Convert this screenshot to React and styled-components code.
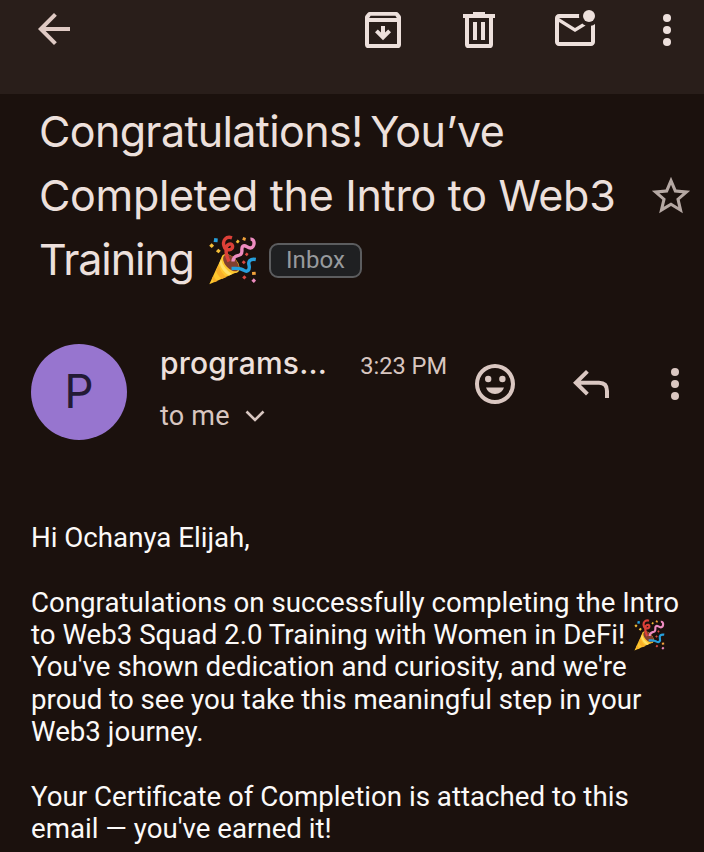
import styled, { createGlobalStyle } from "styled-components";

const GlobalStyle = createGlobalStyle`
  body {
    margin: 0;
    background-color: #1b110d;
    overflow: hidden;
  }
`;

const Page = styled.div`
  width: 704px;
  height: 852px;
  overflow: hidden;
  background-color: #1b110d;
  color: #ede0dc;
  font-family: Roboto, sans-serif;
`;

const Toolbar = styled.header`
  display: flex;
  align-items: flex-start;
  box-sizing: border-box;
  height: 94px;
  padding: 6px 13px 0 30px;
  background-color: #291e1a;
`;

const Actions = styled.div`
  display: flex;
  gap: 48px;
  margin-left: auto;
  margin-right: 44px;
`;

const Icon = styled.svg`
  display: block;
  flex: none;
  width: ${(props) => props.$size || 48}px;
  height: ${(props) => props.$size || 48}px;
  margin-top: ${(props) => props.$top || 0}px;
  fill: ${(props) => props.$color || "#ede0dc"};
`;

const Subject = styled.section`
  display: flex;
  justify-content: space-between;
  height: 193px;
  padding: 5px 10px 0 39px;
`;

const Title = styled.h1`
  margin: 0;
  font-family: Inter, sans-serif;
  font-size: 43px;
  font-weight: 400;
  line-height: 64px;
`;

const TitleLine = styled.span`
  display: flex;
  align-items: center;
  height: 64px;
  white-space: nowrap;
  letter-spacing: ${(props) => props.$spacing}px;
  word-spacing: ${(props) => props.$wordSpacing || 0}px;
`;

const TitleWord = styled.span`
  width: 155px;
`;

const Label = styled.span`
  box-sizing: border-box;
  width: 93px;
  height: 35px;
  margin-top: 2px;
  margin-left: 12px;
  border: 2px solid #5c5d5f;
  border-radius: 9px;
  background-color: #1f2022;
  color: #979a9d;
  font-family: Roboto, sans-serif;
  font-size: 24px;
  font-weight: 400;
  line-height: 30px;
  letter-spacing: 0.1px;
  text-align: center;
`;

const Confetti = styled.svg`
  display: inline-block;
  flex: none;
  width: ${(props) => props.$size}px;
  height: ${(props) => props.$size}px;
  margin-top: ${(props) => props.$top || 0}px;
  margin-left: ${(props) => props.$left || 0}px;
  vertical-align: top;
`;

const Sender = styled.section`
  display: flex;
  align-items: flex-start;
  height: 96px;
  padding: 52px 5px 0 31px;
`;

const Avatar = styled.div`
  width: 96px;
  height: 96px;
  border-radius: 50%;
  background-color: #9775cf;
  color: #231a35;
  font-family: Inter, sans-serif;
  font-size: 46px;
  font-weight: 400;
  line-height: 94px;
  text-align: center;
`;

const Details = styled.div`
  width: 287px;
  margin-left: 33px;
`;

const NameRow = styled.div`
  display: flex;
  justify-content: space-between;
  align-items: baseline;
  height: 40px;
  line-height: 38px;
  white-space: nowrap;
`;

const Name = styled.span`
  font-family: Inter, sans-serif;
  font-size: 30px;
  font-weight: 500;
  letter-spacing: 0.2px;
`;

const Time = styled.span`
  color: #d8c6c0;
  font-size: 23.6px;
`;

const Recipient = styled.div`
  display: flex;
  align-items: center;
  margin-top: 12px;
  height: 40px;
  color: #d8c6c0;
  font-size: 27px;
  letter-spacing: 0.2px;
`;

const Chevron = styled.svg`
  width: 20px;
  height: 12px;
  margin-left: 15.5px;
  fill: none;
  stroke: #d8c6c0;
  stroke-width: 2.6;
`;

const SenderActions = styled.div`
  display: flex;
  margin-top: 16px;
  margin-left: auto;
  margin-right: 36px;
  gap: 48px;
`;

const Message = styled.main`
  padding: 82px 0 0 31px;
  color: #fbf9f8;
  font-size: 27.68px;
  line-height: 32.35px;
  white-space: nowrap;
`;

const Paragraph = styled.p`
  margin: 0 0 32.35px;
`;

const Line = styled.span`
  display: block;
  height: 32.35px;
`;

function MoreIcon({ color, top }) {
  return (
    <Icon viewBox="0 0 24 24" $color={color} $top={top}>
      <circle cx="12" cy="6" r="2" />
      <circle cx="12" cy="12" r="2" />
      <circle cx="12" cy="18" r="2" />
    </Icon>
  );
}

function PartyPopper(props) {
  return (
    <Confetti viewBox="0 0 50 50" role="img" aria-label="🎉" {...props}>
      <path d="M2.3 49.3 15.5 20.5Q24 22 31.5 36.5Z" fill="#fdc72e" />
      <path d="M11.5 30Q14 38 19.5 42L15 44Q10 40 9 35.500Z" fill="#f7ae28" />
      <path d="M6.500 40.500Q7.500 44 10.500 46L7.500 47.300Q5.500 45.500 5 43.500Z" fill="#f7ae28" />
      <path d="M14 24Q17 34 25 39L22 40.500Q14.500 36 12.500 28Z" fill="#ffe068" />
      <ellipse cx="23.500" cy="28.500" rx="11.300" ry="6.600" transform="rotate(48 23.5 28.5)" fill="#fdc72e" />
      <ellipse cx="24" cy="28" rx="10" ry="5.600" transform="rotate(48 24 28)" fill="#81402f" />
      <g fill="none" strokeWidth="3.400">
        <path d="M25 2.800C19 .8 15.200 5.500 17 11C18.500 16.500 26.500 15.500 25.500 10.800C24.500 7.500 19 9 19 14.500C19 18.500 19.500 21.500 22 26.500" stroke="#dc4038" />
        <path d="M43.500 4.300C48.500 3.500 48 12.700 43.500 13C40 13.200 38.500 9 35.800 11.300C33.500 13.500 36.500 17.500 33.500 19.500C31 21.500 26.500 19.500 26 26.500" stroke="#ed8cc0" />
        <path d="M48.800 24.500C43 23.500 41 26.500 42 30C43.200 34.700 40.500 37.500 37 35.400C33 32.500 29 33.500 24.500 33.500" stroke="#269fdb" />
      </g>
      <path d="m7.300 3 3.500.5-.3 3.800-3.900-.4Z" fill="#269fdb" />
      <path d="m4.700 8.300 2.400 2.400-2.400 2.400-2.500-2.400ZM11.300 13.800l2.500 1.900-2.200 2.600-2.700-2ZM30.700 4.600l2 1.700-1.700 2.300-2.300-1.700Z" fill="#f3bd38" />
      <path d="m36.300 2 2.700 1-.8 3-3-1.200ZM45 37l3.600-.2.2 3-3.600.3Z" fill="#f2a33b" />
      <path d="m39.600 17.500 2 1.600-1.700 2.200-2.100-1.700ZM36.700 25.300l2.100 2-2 2-2.100-2ZM37.300 40.300l2.200 2-2.100 2.200-2.200-2.100Z" fill="#d84a42" />
      <path d="m46.800 43.300 2.200 2.200-2.100 2.500-2.500-2.200Z" fill="#ed8cc0" />
    </Confetti>
  );
}

export default function App() {
  const muted = "#dac7c1";

  return (
    <Page>
      <GlobalStyle />
      <Toolbar>
        <Icon viewBox="0 0 24 24" $color="#dfcac4" $top={-1}>
          <path d="M20 11H7.830l5.590-5.590L12 4l-8 8 8 8 1.410-1.410L7.830 13H20Z" />
        </Icon>
        <Actions>
          <Icon viewBox="0 0 24 24">
            <path
              fillRule="evenodd"
              d="M5.300 3H18.700Q19.300 3 19.700 3.500L20.700 4.800Q21 5.200 21 5.700V19.200Q21 21 19.200 21H4.800Q3 21 3 19.200V5.700Q3 5.200 3.300 4.800L4.300 3.500Q4.700 3 5.300 3ZM5.800 4.900 5.100 6H18.900L18.200 4.900ZM5 8V19H19V8Z"
            />
            <path d="M11 10H13V13.200L14.600 11.700 16 13.100 12 17.100 8 13.100 9.400 11.700 11 13.200Z" />
          </Icon>
          <Icon viewBox="0 0 24 24">
            <path
              fillRule="evenodd"
              d="M9 3H15V4H20V6H19V19.200Q19 21 17.200 21H6.800Q5 21 5 19.200V6H4V4H9ZM7 6V19H17V6Z"
            />
            <path d="M9 8H11V17H9ZM13 8H15V17H13Z" />
          </Icon>
          <Icon viewBox="0 0 24 24">
            <circle cx="19" cy="5" r="3" />
            <path d="M22 8.980V18c0 1.100-.9 2-2 2H4c-1.100 0-2-.9-2-2V6c0-1.100.9-2 2-2h10.100a5 5 0 0 0 0 2H4l8 5 3.670-2.290c.47.430 1.020.760 1.630.980L12 13 4 8v10h16V9.900c.740-.150 1.420-.480 2-.920Z" />
          </Icon>
        </Actions>
        <MoreIcon />
      </Toolbar>
      <Subject>
        <Title>
          <TitleLine $spacing={-0.65} $wordSpacing={-4}>
            Congratulations! You’ve
          </TitleLine>
          <TitleLine $spacing={-0.3}>Completed the Intro to Web3</TitleLine>
          <TitleLine $spacing={-1.1}>
            <TitleWord>Training</TitleWord>
            <PartyPopper $size={50} $left={13} $top={2} />
            <Label>Inbox</Label>
          </TitleLine>
        </Title>
        <Icon viewBox="0 0 24 24" $size={46} $top={74} $color="#b5a8a3">
          <path d="m22 9.240-7.190-.620L12 2 9.190 8.630 2 9.240l5.460 4.730L5.820 21 12 17.270 18.180 21l-1.630-7.030L22 9.240ZM12 15.400l-3.760 2.270 1-4.280-3.320-2.880 4.380-.380L12 6.100l1.710 4.040 4.380.380-3.320 2.880 1 4.280L12 15.400Z" />
        </Icon>
      </Subject>
      <Sender>
        <Avatar>P</Avatar>
        <Details>
          <NameRow>
            <Name>programs...</Name>
            <Time>3:23 PM</Time>
          </NameRow>
          <Recipient>
            to me
            <Chevron viewBox="0 0 20 12">
              <path d="m1.500 1.500 8.500 8.500 8.500-8.500" />
            </Chevron>
          </Recipient>
        </Details>
        <SenderActions>
          <Icon viewBox="0 0 24 24" $color={muted}>
            <path
              fillRule="evenodd"
              d="M12 2a10 10 0 1 0 0 20 10 10 0 0 0 0-20Zm0 2a8 8 0 1 1 0 16 8 8 0 0 1 0-16Z"
            />
            <circle cx="8.600" cy="9.500" r="1.600" />
            <circle cx="15.700" cy="9.500" r="1.600" />
            <path d="M7.500 13.800H16.500Q15.500 17 12 17T7.500 13.800Z" />
          </Icon>
          <Icon viewBox="0 0 24 24" $color={muted}>
            <path d="M9.500 5 3 11.400l6.500 6.400 1.400-1.400-4-4H16Q19 12.400 19 15.500V19H21V15.500Q21 10.400 16 10.400H6.900l4-4Z" />
          </Icon>
        </SenderActions>
        <MoreIcon color={muted} top={16} />
      </Sender>
      <Message>
        <Paragraph>
          <Line>Hi Ochanya Elijah,</Line>
        </Paragraph>
        <Paragraph>
          <Line>Congratulations on successfully completing the Intro</Line>
          <Line>
            to Web3 Squad 2.0 Training with Women in DeFi!{" "}
            <PartyPopper $size={32} $left={1} />
          </Line>
          <Line>You've shown dedication and curiosity, and we're</Line>
          <Line>proud to see you take this meaningful step in your</Line>
          <Line>Web3 journey.</Line>
        </Paragraph>
        <Paragraph>
          <Line>Your Certificate of Completion is attached to this</Line>
          <Line>email — you've earned it!</Line>
        </Paragraph>
      </Message>
    </Page>
  );
}
